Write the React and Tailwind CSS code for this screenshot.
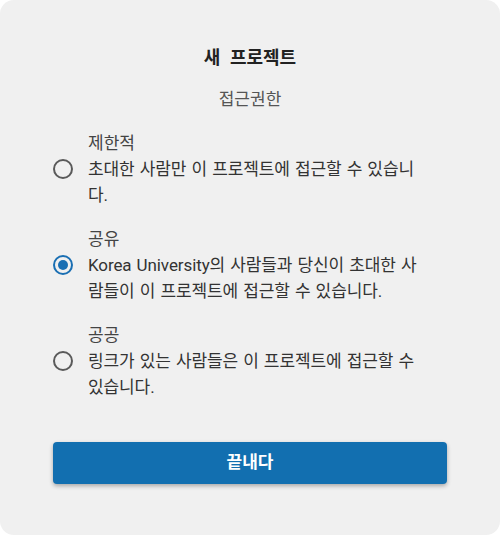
export default function App() {
  const font = { fontFamily: 'Roboto, "Noto Sans CJK KR", sans-serif' };
  const options = [
    { label: "제한적", text: "초대한 사람만 이 프로젝트에 접근할 수 있습니다.", selected: false },
    { label: "공유", text: "Korea University의 사람들과 당신이 초대한 사람들이 이 프로젝트에 접근할 수 있습니다.", selected: true },
    { label: "공공", text: "링크가 있는 사람들은 이 프로젝트에 접근할 수 있습니다.", selected: false },
  ];
  return (
    <div className="w-[500px] h-[535px] bg-white" style={font}>
      <div className="w-full h-full bg-[#f0f0f0] rounded-[14px] flex flex-col px-[53px]">
        <div className="mt-[46px] h-[24px] leading-[24px] text-center text-[18px] font-bold text-[#222] [word-spacing:5px]">새 프로젝트</div>
        <div className="mt-[17px] h-[24px] leading-[24px] text-center text-[17px] text-[#555]">접근권한</div>
        <div className="mt-[19px] flex flex-col gap-[18px]">
          {options.map((o) => (
            <div key={o.label} className="flex flex-col">
              <div className="pl-[35px] text-[17px] leading-[26px] text-[#444]">{o.label}</div>
              <div className="flex items-start gap-[15px]">
                <div className="h-[26px] flex items-center">
                  {o.selected ? (
                    <div className="w-[20px] h-[20px] rounded-full border-2 border-[#1a6fb3] flex items-center justify-center">
                      <div className="w-[10px] h-[10px] rounded-full bg-[#1a6fb3]" />
                    </div>
                  ) : (
                    <div className="w-[20px] h-[20px] rounded-full border-2 border-[#5a5a5a]" />
                  )}
                </div>
                <div className="w-[334px] text-[17px] leading-[26px] text-[#333] tracking-[-0.1px] [word-spacing:1px]">{o.text}</div>
              </div>
            </div>
          ))}
        </div>
        <button className="mt-[42px] h-[42px] w-full rounded-[4px] bg-[#126fb0] text-white text-[17px] font-bold shadow-[0_2px_4px_rgba(0,0,0,0.3)]">
          끝내다
        </button>
      </div>
    </div>
  );
}
